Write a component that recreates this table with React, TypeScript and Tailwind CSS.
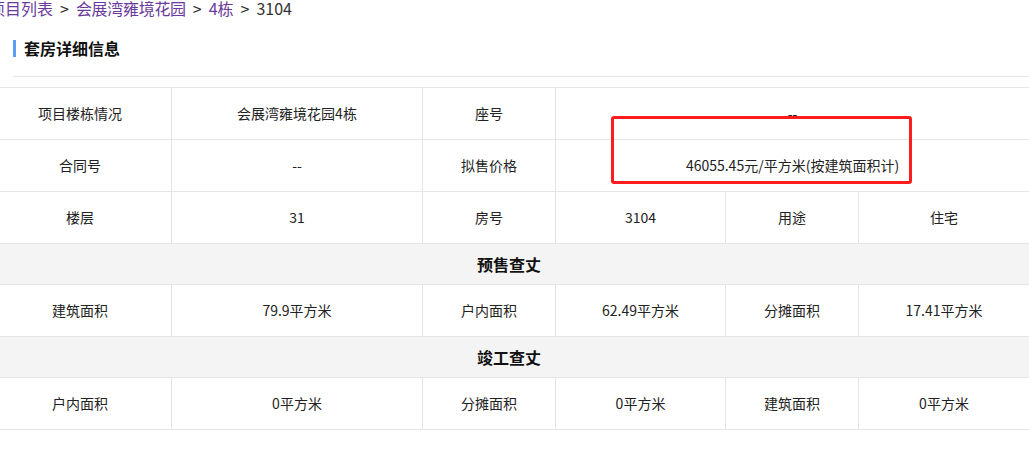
import React from "react";

const cell = "flex items-center justify-center border-b border-r border-[#e5e5e5] h-[52px] text-[14px] text-[#222]";
const cellLast = "flex items-center justify-center border-b border-[#e5e5e5] h-[52px] text-[14px] text-[#222]";
const section = "col-span-6 flex items-center justify-center border-b border-[#e5e5e5] h-[41px] bg-[#f4f4f4] text-[16px] font-bold text-[#111]";

export default function App() {
  return (
    <div
      className="relative -ml-[11px] w-[1040px] bg-white min-h-[476px]"
      style={{ fontFamily: '"Noto Sans CJK SC", "Noto Sans", sans-serif' }}
    >
      <div className="h-[16px] text-[16px] leading-[16px] text-[#333] whitespace-nowrap">
        <span className="text-[#6a3a9c]">项目列表</span>
        <span className="mx-[7px]">&gt;</span>
        <span className="text-[#6a3a9c] tracking-[-0.3px]">会展湾雍境花园</span>
        <span className="mx-[7px]">&gt;</span>
        <span className="text-[#6a3a9c]">4栋</span>
        <span className="mx-[7px]">&gt;</span>
        <span>3104</span>
      </div>

      <div className="mt-[24px] ml-[24px] flex items-center h-[17px] gap-[8px]">
        <div className="w-[3px] h-[17px] bg-[#5b9ef7]" />
        <div className="text-[16px] leading-[17px] font-bold text-[#111]">套房详细信息</div>
      </div>

      <div className="mt-[19px] ml-[24px] h-px bg-[#e5e5e5]" />

      <div className="mt-[10px] grid grid-cols-[183px_251px_133px_170px_133px_170px] border-t border-[#e5e5e5]">
        <div className={cell}>项目楼栋情况</div>
        <div className={cell}>会展湾雍境花园4栋</div>
        <div className={cell}>座号</div>
        <div className={`${cellLast} col-span-3`}>--</div>

        <div className={cell}>合同号</div>
        <div className={cell}>--</div>
        <div className={cell}>拟售价格</div>
        <div className={`${cellLast} col-span-3`}>46055.45元/平方米(按建筑面积计)</div>

        <div className={cell}>楼层</div>
        <div className={cell}>31</div>
        <div className={cell}>房号</div>
        <div className={cell}>3104</div>
        <div className={cell}>用途</div>
        <div className={cellLast}>住宅</div>

        <div className={section}>预售查丈</div>

        <div className={cell}>建筑面积</div>
        <div className={cell}>79.9平方米</div>
        <div className={cell}>户内面积</div>
        <div className={cell}>62.49平方米</div>
        <div className={cell}>分摊面积</div>
        <div className={cellLast}>17.41平方米</div>

        <div className={section}>竣工查丈</div>

        <div className={cell}>户内面积</div>
        <div className={cell}>0平方米</div>
        <div className={cell}>分摊面积</div>
        <div className={cell}>0平方米</div>
        <div className={cell}>建筑面积</div>
        <div className={cellLast}>0平方米</div>
      </div>

      <div className="absolute left-[622px] top-[116px] w-[301px] h-[68px] border-[3px] border-[#ff1c1c] rounded-[3px]" />
    </div>
  );
}
